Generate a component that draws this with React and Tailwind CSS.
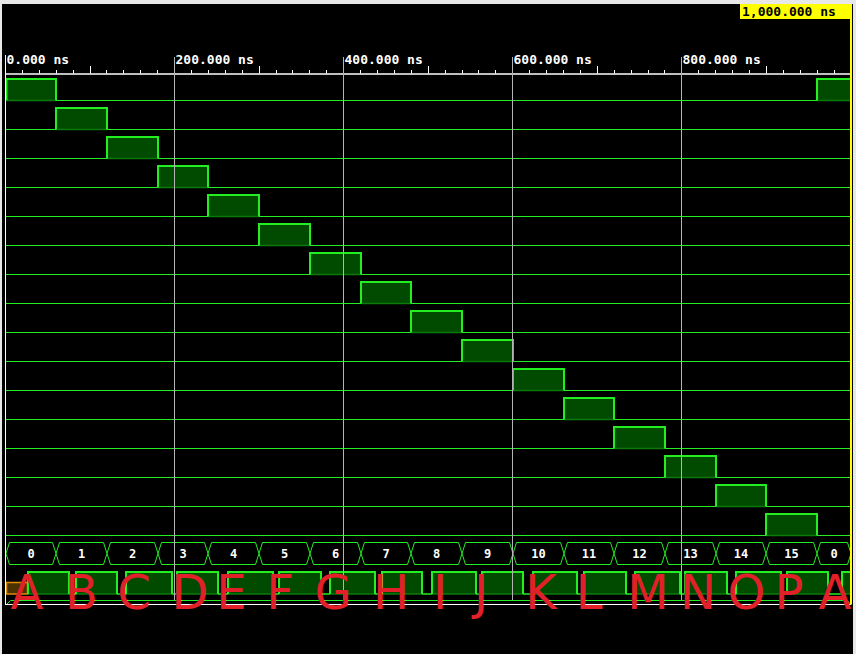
import React from "react";

const S = 0.8455;
const X = (t) => 5.5 + t * S;
const B = Array.from({ length: 17 }, (_, k) => Math.round(X(60 * k)));
const END = 850;

const GREEN = "#22ee22";
const FILL = "#004b00";
const DARK = "#0b7a0b";
const GRID = "#b4b4b4";

const MONO = "font-['DejaVu_Sans_Mono','Liberation_Mono',monospace]";

// per-row pulses [x1, x2, hasFallingEdge]
function rowPulses(n) {
  if (n === 0) return [[B[0] + 0.5, B[1], true], [B[16], END, false]];
  return [[B[n], B[n + 1], true]];
}
function rowLows(n) {
  if (n === 0) return [[B[1], B[16]]];
  return [[5.5, B[n]], [B[n + 1], END]];
}

const BOTTOM_PULSES = [
  [28, 69], [76, 117], [126, 172], [177, 218], [228, 273], [279, 321],
  [330, 375], [382, 422], [432, 476], [482, 523], [533, 577], [584, 626],
  [635, 680], [685, 727], [736, 781], [787, 828], [842, END],
];

const LETTERS = [
  ["A", 27], ["B", 81.5], ["C", 134], ["D", 190], ["E", 231.5], ["F", 280],
  ["G", 333], ["H", 391], ["I", 440], ["J", 481], ["K", 541], ["L", 589],
  ["M", 648], ["N", 698], ["O", 746.5], ["P", 789], ["A", 835],
];

function Pulse({ x1, x2, top, low, fall = true }) {
  return (
    <>
      <rect x={x1} y={top} width={x2 - x1} height={low - top} fill={FILL} />
      <line x1={x1} x2={x2} y1={low} y2={low} stroke={DARK} strokeWidth="1.5" />
      <path
        d={`M${x1} ${low} V${top + 1} H${x2} ${fall ? `V${low}` : ""}`}
        stroke={GREEN}
        strokeWidth="2"
        fill="none"
      />
    </>
  );
}

function Waveforms() {
  const rows = Array.from({ length: 16 }, (_, n) => n);
  const ticks = [];
  for (let k = 1; k <= 50; k++) {
    const t = 20 * k;
    if (t % 200 === 0) continue;
    const x = Math.floor(X(t)) + 0.5;
    const tall = t % 100 === 0;
    ticks.push(
      <line key={k} x1={x} x2={x} y1={tall ? 66 : 70} y2={73.5} stroke="#ffffff" strokeWidth="1" />
    );
  }
  const grids = [1, 2, 3, 4].map((k) => Math.floor(X(200 * k)) + 0.5);
  const labels = [
    ["0.000 ns", 6.5],
    ["200.000 ns", grids[0] + 1],
    ["400.000 ns", grids[1] + 1],
    ["600.000 ns", grids[2] + 1],
    ["800.000 ns", grids[3] + 1],
  ];

  const bus = Array.from({ length: 17 }, (_, k) => {
    const x1 = k === 0 ? 6 : B[k];
    const x2 = k < 16 ? B[k + 1] : END + 1;
    return [x1, x2, k < 16 ? String(k) : "0"];
  });
  const bt = 542.5, bb = 564.5, bc = 553.5, s = 3.5;

  return (
    <svg width="851" height="635" viewBox="2 19 851 635" className="block shrink-0">
      {/* time axis */}
      {labels.map(([txt, x]) => (
        <text
          key={txt}
          x={x}
          y={64}
          fill="#ffffff"
          className={`${MONO} text-[13px] font-bold`}
        >
          {txt}
        </text>
      ))}
      <line x1="5" x2={END + 1} y1="74" y2="74" stroke="#ffffff" strokeWidth="1.5" />
      {ticks}

      {/* signal rows */}
      {rows.map((n) => {
        const top = 78 + 29 * n;
        const low = 100.5 + 29 * n;
        return (
          <g key={n}>
            {rowLows(n).map(([a, b], i) => (
              <line key={i} x1={a} x2={b} y1={low} y2={low} stroke={GREEN} strokeWidth="1" />
            ))}
            {rowPulses(n).map(([a, b, f], i) => (
              <Pulse key={i} x1={a} x2={b} top={top} low={low} fall={f} />
            ))}
          </g>
        );
      })}

      {/* bus row */}
      {bus.map(([x1, x2, v], i) => (
        <g key={i}>
          <polygon
            points={`${x1},${bc} ${x1 + s},${bt} ${x2 - s},${bt} ${x2},${bc} ${x2 - s},${bb} ${x1 + s},${bb}`}
            fill="none"
            stroke={GREEN}
            strokeWidth="1"
          />
          <text
            x={(x1 + x2) / 2}
            y={558}
            textAnchor="middle"
            fill="#ffffff"
            className={`${MONO} text-[12px] font-bold`}
          >
            {v}
          </text>
        </g>
      ))}

      {/* bottom clock-like row */}
      <rect x="6.5" y="582.5" width="21" height="11.5" fill="#4a3300" stroke="#e08a00" strokeWidth="1.5" />
      {BOTTOM_PULSES.map(([a, b], i) => {
        const next = BOTTOM_PULSES[i + 1];
        return (
          <g key={i}>
            {next && (
              <line x1={b} x2={next[0]} y1="594" y2="594" stroke={GREEN} strokeWidth="1.5" />
            )}
            <Pulse x1={a} x2={b} top={571} low={594} fall={b < END} />
          </g>
        );
      })}

      {/* partial next bus row */}
      <polyline points="7,604 10.5,600.5 847,600.5 850.5,604" fill="none" stroke={GREEN} strokeWidth="1" />

      {/* grid lines */}
      {grids.map((x) => (
        <line key={x} x1={x} x2={x} y1="57" y2="600" stroke={GRID} strokeWidth="1" />
      ))}
      <line x1="5.5" x2="5.5" y1="55" y2="604.5" stroke="#ffffff" strokeWidth="1" />
      <line x1="5" x2={END + 1} y1="604.5" y2="604.5" stroke="#ffffff" strokeWidth="1" />

      {/* cursor */}
      <rect x="850" y="19" width="2" height="585.5" fill="#ffff00" />
    </svg>
  );
}

export default function App() {
  return (
    <div className="w-[856px] h-[654px] overflow-hidden bg-[#e8e8e8] pt-[4px] pl-[2px] pr-[3px]">
      <div className="relative h-full bg-black flex flex-col">
        <div className="flex justify-end h-[15px] shrink-0">
          <div
            className={`w-[112px] h-[15px] mr-[1px] pl-[2px] bg-[#ffff00] text-black text-[13px] leading-[15px] font-bold ${MONO}`}
          >
            1,000.000 ns
          </div>
        </div>
        <Waveforms />
        <div className="absolute left-0 top-[564px] w-full h-[48px] text-[48px] leading-[48px] text-[#e2202a] font-['DejaVu_Sans','Liberation_Sans',sans-serif] pointer-events-none">
          {LETTERS.map(([ch, cx], i) => (
            <span
              key={i}
              className="absolute top-0 w-[60px] text-center"
              style={{ left: `${cx - 2 - 30}px` }}
            >
              {ch}
            </span>
          ))}
        </div>
      </div>
    </div>
  );
}
